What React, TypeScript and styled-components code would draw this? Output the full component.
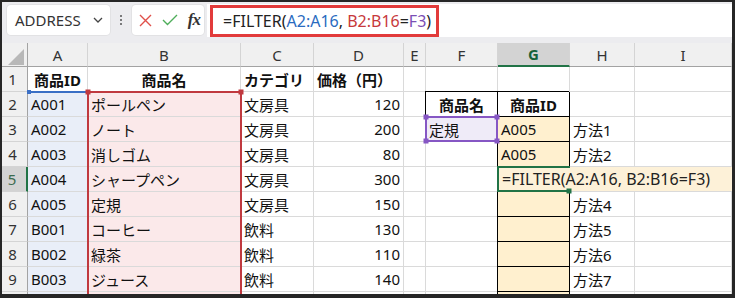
import React from 'react';
import styled, { createGlobalStyle, css } from 'styled-components';

const GlobalStyle = createGlobalStyle`
  html, body { margin: 0; padding: 0; background: #262626; }
  body { font-family: "Noto Sans", "Noto Sans CJK JP", sans-serif; }
`;

// column widths: row header, A..I
const COLS = [26, 60, 153, 73, 90, 22, 72, 72, 65, 97];
const LETTERS = ['A', 'B', 'C', 'D', 'E', 'F', 'G', 'H', 'I'];
const HEAD_H = 24;
const ROW_H = 25;

const colX = (c: number) => COLS.slice(0, c).reduce((a, b) => a + b, 0);
const rowY = (r: number) => HEAD_H + (r - 1) * ROW_H;

type Tone = 'id' | 'name' | 'cond' | 'out' | 'edit' | undefined;

const TONES: Record<string, string> = {
  id: '#e9eef8',
  name: '#fbe9ea',
  cond: '#efebf8',
  out: '#fff0cf',
  edit: '#fdf1d8',
};

const Frame = styled.div`
  width: 735px;
  height: 298px;
  box-sizing: border-box;
  padding: 2px 3px 4px 2px;
  background: #262626;
`;

const Window = styled.div`
  width: 100%;
  height: 100%;
  background: #fff;
  display: flex;
  flex-direction: column;
  overflow: hidden;
`;

const Toolbar = styled.div`
  height: 41px;
  flex: none;
  box-sizing: border-box;
  background: #ececef;
  display: flex;
  align-items: flex-start;
  padding: 3px 0 0 5px;
`;

const Box = styled.div`
  height: 30px;
  box-sizing: border-box;
  background: #fff;
  border-radius: 4px;
  box-shadow: 0 0 0 1px #e2e2e4;
  display: flex;
  align-items: center;
`;

const NameBox = styled(Box)`
  width: 103px;
  padding: 0 7px 0 8px;
  justify-content: space-between;
  font-size: 15px;
  color: #333;
`;

const Dots = styled.div`
  width: 22px;
  height: 30px;
  display: flex;
  flex-direction: column;
  align-items: center;
  justify-content: center;
  gap: 2px;
  span {
    width: 2px;
    height: 2px;
    border-radius: 1px;
    background: #555;
  }
`;

const ButtonBox = styled(Box)`
  width: 72px;
  padding: 0 4px 0 7px;
  justify-content: space-between;
`;

const Fx = styled.span`
  font-family: "Liberation Serif", serif;
  font-style: italic;
  font-size: 17px;
  color: #333;
  font-weight: bold;
  letter-spacing: -1px;
`;

const FormulaField = styled.div`
  flex: 1;
  height: 33px;
  margin: -1px 0 0 3px;
  background: #fff;
  display: flex;
  align-items: center;
  padding-left: 3px;
`;

const FormulaMark = styled.div`
  width: 229px;
  height: 32px;
  box-sizing: border-box;
  border: 3px solid #e23b3b;
  display: flex;
  align-items: center;
  padding-left: 10px;
  font-size: 16px;
  color: #222;
  white-space: pre;
`;

const Ref = styled.span<{ $c: string }>`
  color: ${(p) => p.$c};
`;

const Sheet = styled.div`
  position: relative;
  flex: 1;
  overflow: hidden;
  display: grid;
  grid-template-columns: ${COLS.map((w) => w + 'px').join(' ')};
  grid-template-rows: ${HEAD_H}px;
  grid-auto-rows: ${ROW_H}px;
  font-size: 15px;
  color: #111;
`;

const Corner = styled.div`
  background: #f0f0f0;
  border-right: 1px solid #a3a3a3;
  border-bottom: 1px solid #a3a3a3;
  display: flex;
  align-items: flex-end;
  justify-content: flex-end;
  padding: 0 3px 1px 0;
`;

const ColHead = styled.div<{ $active?: boolean }>`
  background: ${(p) => (p.$active ? '#d3d3d3' : '#f0f0f0')};
  border-right: 1px solid #d4d4d4;
  border-bottom: ${(p) => (p.$active ? '2px solid #217346' : '1px solid #a3a3a3')};
  display: flex;
  align-items: center;
  justify-content: center;
  color: ${(p) => (p.$active ? '#14613a' : '#333')};
  font-weight: ${(p) => (p.$active ? 'bold' : 'normal')};
  font-size: 15px;
`;

const RowHead = styled.div<{ $active?: boolean }>`
  background: ${(p) => (p.$active ? '#d3d3d3' : '#f0f0f0')};
  border-right: ${(p) => (p.$active ? '2px solid #217346' : '1px solid #a3a3a3')};
  border-bottom: 1px solid #d4d4d4;
  display: flex;
  align-items: center;
  justify-content: center;
  padding-right: 4px;
  color: ${(p) => (p.$active ? '#3c6b4e' : '#333')};
`;

const Cell = styled.div<{ $tone?: Tone; $align?: string; $bold?: boolean; $box?: boolean }>`
  min-width: 0;
  background: ${(p) => (p.$tone ? TONES[p.$tone] : '#fff')};
  border-right: 1px solid #dadada;
  border-bottom: 1px solid #dadada;
  display: flex;
  align-items: center;
  padding: 0 3px 0 3px;
  white-space: nowrap;
  overflow: hidden;
  justify-content: ${(p) =>
    p.$align === 'right' ? 'flex-end' : p.$align === 'center' ? 'center' : 'flex-start'};
  font-weight: ${(p) => (p.$bold ? 'bold' : 'normal')};
  ${(p) =>
    p.$box &&
    css`
      border-right-color: #000;
      border-bottom-color: #000;
      box-shadow: -1px -1px 0 0 #000;
    `}
`;

const EditCell = styled.div`
  grid-column: span 3;
  background: ${TONES.edit};
  border-bottom: 1px solid #dadada;
  display: flex;
  align-items: center;
  padding-left: 4px;
  white-space: pre;
  font-size: 16px;
  color: #222;
`;

const RangeFrame = styled.div<{ $color: string; $open?: 'bottom' | 'right' | 'top-only' }>`
  position: absolute;
  box-sizing: border-box;
  border: 2px solid ${(p) => p.$color};
  ${(p) => p.$open === 'bottom' && css`border-bottom: none;`}
  ${(p) => p.$open === 'right' && css`border-right: none;`}
  ${(p) => p.$open === 'top-only' && css`border-bottom: none; border-left: none; border-right: none;`}
  pointer-events: none;
`;

const Handle = styled.div<{ $color: string; $size?: number }>`
  position: absolute;
  width: ${(p) => p.$size ?? 5}px;
  height: ${(p) => p.$size ?? 5}px;
  background: ${(p) => p.$color};
  transform: translate(-50%, -50%);
`;

type CellDef = { v?: string; bold?: boolean; align?: string; tone?: Tone; box?: boolean };

const ROWS: CellDef[][] = [
  [
    { v: '商品ID', bold: true, align: 'center' },
    { v: '商品名', bold: true, align: 'center' },
    { v: 'カテゴリ', bold: true },
    { v: '価格（円）', bold: true },
    {}, {}, {}, {}, {},
  ],
  [
    { v: 'A001', tone: 'id' }, { v: 'ポールペン', tone: 'name' }, { v: '文房具' }, { v: '120', align: 'right' },
    {}, { v: '商品名', bold: true, align: 'center', box: true }, { v: '商品ID', bold: true, align: 'center', box: true }, {}, {},
  ],
  [
    { v: 'A002', tone: 'id' }, { v: 'ノート', tone: 'name' }, { v: '文房具' }, { v: '200', align: 'right' },
    {}, { v: '定規', tone: 'cond' }, { v: 'A005', tone: 'out', box: true }, { v: '方法1' }, {},
  ],
  [
    { v: 'A003', tone: 'id' }, { v: '消しゴム', tone: 'name' }, { v: '文房具' }, { v: '80', align: 'right' },
    {}, {}, { v: 'A005', tone: 'out', box: true }, { v: '方法2' }, {},
  ],
  [
    { v: 'A004', tone: 'id' }, { v: 'シャープペン', tone: 'name' }, { v: '文房具' }, { v: '300', align: 'right' },
    {}, {},
  ],
  [
    { v: 'A005', tone: 'id' }, { v: '定規', tone: 'name' }, { v: '文房具' }, { v: '150', align: 'right' },
    {}, {}, { tone: 'out', box: true }, { v: '方法4' }, {},
  ],
  [
    { v: 'B001', tone: 'id' }, { v: 'コーヒー', tone: 'name' }, { v: '飲料' }, { v: '130', align: 'right' },
    {}, {}, { tone: 'out', box: true }, { v: '方法5' }, {},
  ],
  [
    { v: 'B002', tone: 'id' }, { v: '緑茶', tone: 'name' }, { v: '飲料' }, { v: '110', align: 'right' },
    {}, {}, { tone: 'out', box: true }, { v: '方法6' }, {},
  ],
  [
    { v: 'B003', tone: 'id' }, { v: 'ジュース', tone: 'name' }, { v: '飲料' }, { v: '140', align: 'right' },
    {}, {}, { tone: 'out', box: true }, { v: '方法7' }, {},
  ],
  [
    { tone: 'id' }, { tone: 'name' }, {}, {}, {}, {}, { tone: 'out', box: true }, {}, {},
  ],
];

const FORMULA = '=FILTER(A2:A16, B2:B16=F3)';

const ColoredFormula = () => (
  <>
    {'=FILTER('}
    <Ref $c="#2a6bbf">A2:A16</Ref>
    {', '}
    <Ref $c="#c7393c">B2:B16</Ref>
    {'='}
    <Ref $c="#7b4fb5">F3</Ref>
    {')'}
  </>
);

export default function App() {
  const gx = colX(7);
  const gy = rowY(5);
  return (
    <Frame>
      <GlobalStyle />
      <Window>
        <Toolbar>
          <NameBox>
            <span>ADDRESS</span>
            <svg width="10" height="6" viewBox="0 0 10 6">
              <path d="M1 1l4 4 4-4" fill="none" stroke="#444" strokeWidth="1.3" />
            </svg>
          </NameBox>
          <Dots>
            <span />
            <span />
            <span />
          </Dots>
          <ButtonBox>
            <svg width="13" height="13" viewBox="0 0 13 13">
              <path d="M1 1l11 11M12 1L1 12" stroke="#e0504a" strokeWidth="1.4" fill="none" />
            </svg>
            <svg width="16" height="12" viewBox="0 0 16 12">
              <path d="M1 6l4.5 4.5L15 1" stroke="#4fae5b" strokeWidth="1.4" fill="none" />
            </svg>
            <Fx>fx</Fx>
          </ButtonBox>
          <FormulaField>
            <FormulaMark>
              <ColoredFormula />
            </FormulaMark>
          </FormulaField>
        </Toolbar>
        <Sheet>
          <Corner>
            <svg width="16" height="16" viewBox="0 0 16 16">
              <path d="M16 0V16H0Z" fill="#b8b8b8" />
            </svg>
          </Corner>
          {LETTERS.map((l) => (
            <ColHead key={l} $active={l === 'G'}>
              {l}
            </ColHead>
          ))}
          {ROWS.map((row, ri) => (
            <React.Fragment key={ri}>
              <RowHead $active={ri === 4}>{ri < 9 ? ri + 1 : ''}</RowHead>
              {row.map((c, ci) => (
                <Cell key={ci} $tone={c.tone} $align={c.align} $bold={c.bold} $box={c.box}>
                  {c.v}
                </Cell>
              ))}
              {ri === 4 && <EditCell>{FORMULA}</EditCell>}
            </React.Fragment>
          ))}

          {/* A2:A16 reference */}
          <RangeFrame
            $color="#3a6fc6"
            $open="top-only"
            style={{ left: colX(1), top: rowY(2) - 1, width: COLS[1], height: 300 }}
          />
          <Handle $color="#3a6fc6" $size={4} style={{ left: colX(1) + 1, top: rowY(2) }} />

          {/* B2:B16 reference */}
          <RangeFrame
            $color="#c0393f"
            $open="bottom"
            style={{ left: colX(2) - 1, top: rowY(2) - 1, width: COLS[2] + 2, height: 300 }}
          />
          <Handle $color="#c0393f" style={{ left: colX(2), top: rowY(2) }} />
          <Handle $color="#c0393f" style={{ left: colX(3), top: rowY(2) }} />

          {/* F3 reference */}
          <RangeFrame
            $color="#8657c4"
            style={{ left: colX(6) - 1, top: rowY(3) - 1, width: COLS[6] + 1, height: ROW_H + 1 }}
          />
          <Handle $color="#8657c4" style={{ left: colX(6), top: rowY(3) }} />
          <Handle $color="#8657c4" style={{ left: colX(7) - 1, top: rowY(3) }} />
          <Handle $color="#8657c4" style={{ left: colX(6), top: rowY(4) - 1 }} />
          <Handle $color="#8657c4" style={{ left: colX(7) - 1, top: rowY(4) - 1 }} />

          {/* active cell G5 */}
          <RangeFrame
            $color="#217346"
            $open="right"
            style={{ left: gx - 1, top: gy - 1, width: COLS[7] + 1, height: ROW_H + 1 }}
          />
          <Handle $color="#217346" style={{ left: gx + COLS[7] - 1, top: gy + ROW_H - 1 }} />
        </Sheet>
      </Window>
    </Frame>
  );
}
